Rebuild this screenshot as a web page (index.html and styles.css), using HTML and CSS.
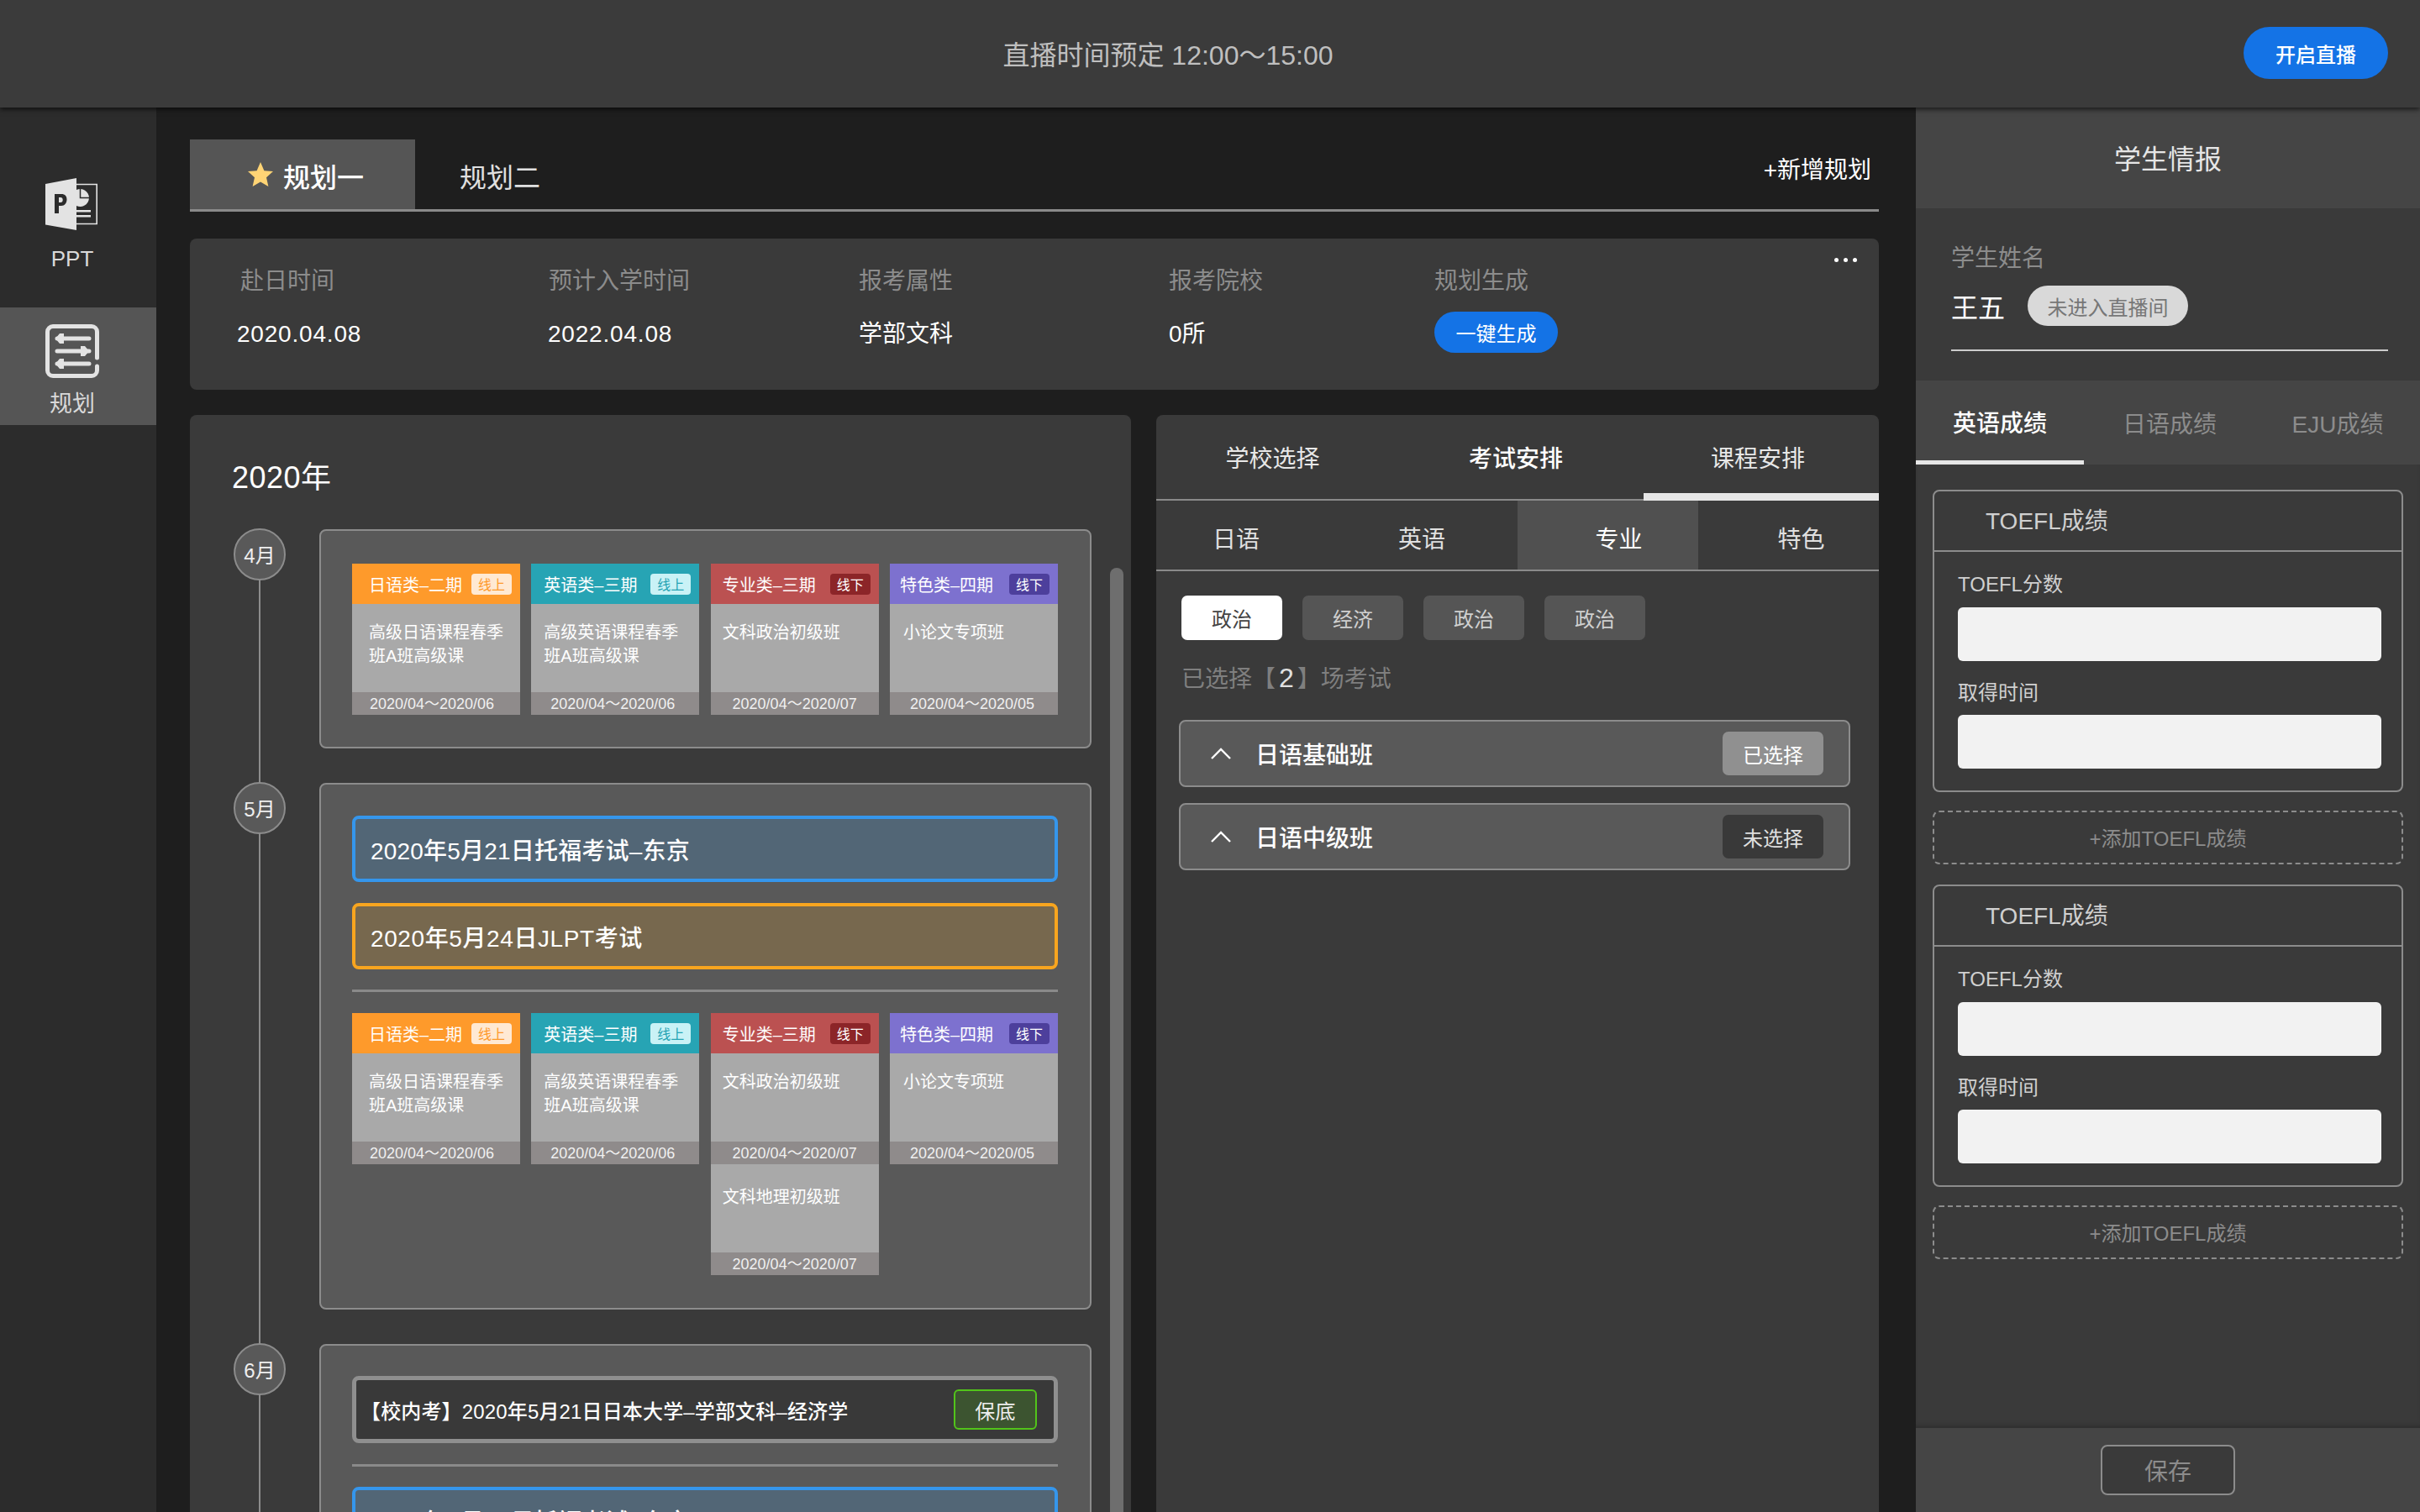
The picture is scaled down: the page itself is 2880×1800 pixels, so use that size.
FILE: index.html
```html
<!DOCTYPE html>
<html lang="zh">
<head>
<meta charset="utf-8">
<title>直播规划</title>
<link rel="stylesheet" href="styles.css">
</head>
<body>
<header class="topbar">
  <div class="topbar-title">直播时间预定 12:00～15:00</div>
  <button class="live-btn">开启直播</button>
</header>
<div class="layout">
  <nav class="side">
    <div class="side-item side-ppt">
      <svg class="ico-ppt" viewBox="0 0 62 62"><path fill="#e3e3e3" d="M0 7 37 0V62L0 55.500Z"/><path fill="#2c2c2c" fill-rule="evenodd" d="M11 19h8c4.500 0 6.500 2.500 6.500 6.500S23 33 19 33h-3v9h-5Zm5 4v6h2c1.800 0 2.700-1 2.700-3s-.9-3-2.700-3Z"/><path fill="none" stroke="#e3e3e3" stroke-width="1.600" d="M37 7.500h24.200v47H37"/><path fill="#e3e3e3" d="M37 14a10.500 10.500 0 1 1 0 19Z"/><path fill="none" stroke="#2c2c2c" stroke-width="1.500" d="M41.500 12v11.500H53"/><path fill="#e3e3e3" d="M37 38h17v2.500H37ZM37 44h17v2.500H37Z"/></svg>
      <span class="side-label">PPT</span>
    </div>
    <div class="side-item side-active">
      <svg class="ico-plan" viewBox="0 0 64 64"><path fill="none" stroke="#e3e3e3" stroke-width="5" stroke-linecap="round" d="M61.500 40V9a6.500 6.500 0 0 0-6.500-6.500H9A6.500 6.500 0 0 0 2.500 9v46A6.500 6.500 0 0 0 9 61.500h46a6.500 6.500 0 0 0 6.500-6.500v-5"/><path fill="none" stroke="#e3e3e3" stroke-width="5" stroke-linecap="round" d="M14 17h38M14 32h38M14 47h38"/><path fill="#e3e3e3" d="M17 11h5v12h-5l-5-6ZM42 26h5l5 6-5 6h-5ZM17 41h5v12h-5l-5-6Z"/></svg>
      <span class="side-label">规划</span>
    </div>
  </nav>

  <main class="main">
    <div class="plan-tabs">
      <div class="plan-tab plan-tab-on">
        <svg class="star" viewBox="0 0 30 30"><path fill="#ffd475" d="M15 0l4.400 10.200 10.600.900-8 7.200 2.400 10.700L15 23.400 5.600 29l2.400-10.700-8-7.200 10.600-.9Z"/></svg>
        <span>规划一</span>
      </div>
      <div class="plan-tab plan-tab-off">规划二</div>
      <div class="plan-add">+新增规划</div>
    </div>

    <section class="info">
      <div class="info-col col-a"><div class="info-k">赴日时间</div><div class="info-v num">2020.04.08</div></div>
      <div class="info-col col-b"><div class="info-k">预计入学时间</div><div class="info-v num">2022.04.08</div></div>
      <div class="info-col col-c"><div class="info-k">报考属性</div><div class="info-v">学部文科</div></div>
      <div class="info-col col-d"><div class="info-k">报考院校</div><div class="info-v">0所</div></div>
      <div class="info-col col-e"><div class="info-k">规划生成</div><button class="gen-btn">一键生成</button></div>
      <div class="dots"><i></i><i></i><i></i></div>
    </section>

    <div class="work">
      <section class="timeline">
        <h2 class="year">2020年</h2>
        <div class="track"></div>
        <div class="thumb"></div>

        <div class="month month-4">
          <div class="bubble">4月</div>
          <div class="mbox">
            <div class="cards">
              <div class="card"><div class="ch ch-o"><span>日语类–二期</span><b class="tag tag-o">线上</b></div><div class="cb">高级日语课程春季班A班高级课</div><div class="cf">2020/04～2020/06</div></div>
              <div class="card"><div class="ch ch-t"><span>英语类–三期</span><b class="tag tag-t">线上</b></div><div class="cb">高级英语课程春季班A班高级课</div><div class="cf">2020/04～2020/06</div></div>
              <div class="card"><div class="ch ch-r"><span>专业类–三期</span><b class="tag tag-r">线下</b></div><div class="cb">文科政治初级班</div><div class="cf">2020/04～2020/07</div></div>
              <div class="card"><div class="ch ch-p"><span>特色类–四期</span><b class="tag tag-p">线下</b></div><div class="cb">小论文专项班</div><div class="cf">2020/04～2020/05</div></div>
            </div>
          </div>
        </div>

        <div class="month month-5">
          <div class="bubble">5月</div>
          <div class="mbox mbox-5">
            <div class="exam exam-b">2020年5月21日托福考试–东京</div>
            <div class="exam exam-y">2020年5月24日JLPT考试</div>
            <hr class="rule">
            <div class="cards">
              <div class="card"><div class="ch ch-o"><span>日语类–二期</span><b class="tag tag-o">线上</b></div><div class="cb">高级日语课程春季班A班高级课</div><div class="cf">2020/04～2020/06</div></div>
              <div class="card"><div class="ch ch-t"><span>英语类–三期</span><b class="tag tag-t">线上</b></div><div class="cb">高级英语课程春季班A班高级课</div><div class="cf">2020/04～2020/06</div></div>
              <div class="card"><div class="ch ch-r"><span>专业类–三期</span><b class="tag tag-r">线下</b></div><div class="cb">文科政治初级班</div><div class="cf">2020/04～2020/07</div><div class="cb">文科地理初级班</div><div class="cf">2020/04～2020/07</div></div>
              <div class="card"><div class="ch ch-p"><span>特色类–四期</span><b class="tag tag-p">线下</b></div><div class="cb">小论文专项班</div><div class="cf">2020/04～2020/05</div></div>
            </div>
          </div>
        </div>

        <div class="month month-6">
          <div class="bubble">6月</div>
          <div class="mbox mbox-6">
            <div class="school"><span>【校内考】2020年5月21日日本大学–学部文科–经济学</span><b class="safe">保底</b></div>
            <hr class="rule rule-6">
            <div class="exam exam-b">2020年5月21日托福考试–东京</div>
          </div>
        </div>
      </section>

      <section class="arrange">
        <div class="a-tabs">
          <div class="a-tab">学校选择</div>
          <div class="a-tab a-tab-strong">考试安排</div>
          <div class="a-tab a-tab-on">课程安排</div>
        </div>
        <div class="s-tabs">
          <div class="s-tab s-1">日语</div>
          <div class="s-tab s-2">英语</div>
          <div class="s-tab s-3">专业</div>
          <div class="s-tab s-4">特色</div>
        </div>
        <div class="chips">
          <span class="chip chip-on">政治</span>
          <span class="chip">经济</span>
          <span class="chip">政治</span>
          <span class="chip">政治</span>
        </div>
        <div class="count">已选择【<em>2</em>】场考试</div>
        <div class="row">
          <svg class="chev" viewBox="0 0 24 14"><path fill="none" stroke="#fff" stroke-width="2.400" d="M1 13 12 2l11 11"/></svg>
          <span class="row-name">日语基础班</span>
          <button class="pick pick-on">已选择</button>
        </div>
        <div class="row">
          <svg class="chev" viewBox="0 0 24 14"><path fill="none" stroke="#fff" stroke-width="2.400" d="M1 13 12 2l11 11"/></svg>
          <span class="row-name">日语中级班</span>
          <button class="pick">未选择</button>
        </div>
      </section>
    </div>
  </main>

  <aside class="student">
    <div class="st-head">学生情报</div>
    <div class="st-name">
      <div class="st-k">学生姓名</div>
      <div class="st-v"><span class="st-who">王五</span><span class="st-pill">未进入直播间</span></div>
    </div>
    <div class="st-tabs">
      <div class="st-tab st-tab-on">英语成绩</div>
      <div class="st-tab">日语成绩</div>
      <div class="st-tab">EJU成绩</div>
    </div>
    <div class="st-body">
      <div class="score">
        <div class="score-h">TOEFL成绩</div>
        <div class="score-b">
          <label class="f-l">TOEFL分数</label><div class="f-i"></div>
          <label class="f-l f-l2">取得时间</label><div class="f-i"></div>
        </div>
      </div>
      <div class="add">+添加TOEFL成绩</div>
      <div class="score">
        <div class="score-h">TOEFL成绩</div>
        <div class="score-b">
          <label class="f-l">TOEFL分数</label><div class="f-i"></div>
          <label class="f-l f-l2">取得时间</label><div class="f-i"></div>
        </div>
      </div>
      <div class="add">+添加TOEFL成绩</div>
    </div>
    <div class="st-foot"><button class="save">保存</button></div>
  </aside>
</div>
</body>
</html>
```

FILE: styles.css
```css
* { box-sizing: border-box; }
html, body { margin: 0; height: 1800px; width: 2880px; overflow: hidden; background: #1e1e1e; }
body { font-family: "Liberation Sans", "Noto Sans CJK SC", sans-serif; color: #fff; text-spacing-trim: space-all; }
button { font-family: inherit; border: 0; padding: 0; }
hr { margin: 0; border: 0; }

.topbar { position: relative; z-index: 3; height: 128px; background: #3b3b3b; box-shadow: 0 2px 6px rgba(0,0,0,.7); display: flex; align-items: center; justify-content: center; padding: 3px 100px 0 0; }
.topbar-title { font-size: 32px; color: #bfbfbf; line-height: 44px; }
.live-btn { position: absolute; left: 2670px; top: 32px; width: 172px; height: 62px; border-radius: 31px; background: #1473e6; color: #fff; font-size: 24px; font-weight: 500; }

.layout { display: flex; height: 1672px; }
.side { width: 186px; flex: none; background: #2c2c2c; }
.side-item { height: 140px; display: flex; flex-direction: column; align-items: center; padding-right: 14px; }
.side-ppt { height: 238px; padding-top: 84px; }
.side-active { background: #555; padding-top: 20px; }
.ico-ppt { width: 62px; height: 62px; display: block; margin-right: 2px; }
.ico-plan { width: 64px; height: 64px; display: block; }
.side-label { font-size: 26px; line-height: 36px; color: #d9d9d9; }
.side-ppt .side-label { margin-top: 16px; }
.side-active .side-label { margin-top: 13px; font-size: 27px; }

.main { width: 2094px; flex: none; padding: 38px 44px 0 40px; }
.plan-tabs { height: 86px; display: flex; border-bottom: 3px solid #8a8a8a; position: relative; }
.plan-tab { height: 83px; display: flex; align-items: center; font-size: 32px; }
.plan-tab-on { width: 268px; background: #555; font-weight: 500; padding-left: 69px; gap: 12px; }
.plan-tab-on span, .plan-tab-off { padding-top: 2px; }
.star { width: 30px; height: 30px; }
.plan-tab-off { padding-left: 53px; color: #e0e0e0; }
.plan-add { margin-left: auto; margin-right: 9px; font-size: 28px; height: 83px; line-height: 73px; }

.info { height: 180px; margin-top: 32px; background: #3a3a3a; border-radius: 8px; position: relative; display: flex; }
.info-col { padding-top: 31px; flex: none; }
.col-a { width: 368px; padding-left: 56px; }
.col-b { width: 428px; padding-left: 58px; }
.col-c { width: 369px; }
.col-d { width: 316px; }
.info-k { font-size: 28px; line-height: 40px; color: #8c8c8c; padding-bottom: 23px; }
.col-a .info-k { padding-left: 4px; }
.col-b .info-k { padding-left: 1px; }
.info-v { font-size: 28px; line-height: 40px; color: #fff; }
.num { letter-spacing: .8px; }
.gen-btn { display: block; width: 147px; height: 49px; border-radius: 25px; background: #1473e6; color: #fff; font-size: 24px; margin-top: -7px; }
.dots { position: absolute; right: 26px; top: 23px; display: flex; gap: 6px; }
.dots i { display: block; width: 5px; height: 5px; border-radius: 50%; background: #fff; }

.work { display: flex; gap: 30px; margin-top: 30px; }
.timeline { position: relative; width: 1120px; height: 1306px; background: #3a3a3a; border-radius: 8px 8px 0 0; overflow: hidden; padding: 0 47px 0 52px; flex: none; }
.year { margin: 0 0 0 -2px; font-size: 36px; font-weight: 400; line-height: 50px; padding-top: 50px; height: 136px; letter-spacing: .5px; }
.track { position: absolute; left: 82px; top: 160px; bottom: 0; width: 2px; background: #8c8c8c; }
.thumb { position: absolute; left: 1095px; top: 182px; bottom: 0; width: 16px; background: #6e6e6e; border-radius: 8px 8px 0 0; }
.month { position: relative; padding-left: 102px; }
.month-5 { margin-top: 41px; }
.month-6 { margin-top: 41px; }
.bubble { position: absolute; left: 0; top: -1px; width: 62px; height: 62px; border-radius: 50%; background: #595959; border: 2px solid #8c8c8c; display: flex; align-items: center; justify-content: center; font-size: 24px; color: #eee; padding-bottom: 2px; }
.mbox { background: #595959; border: 2px solid #8c8c8c; border-radius: 8px; padding: 39px 38px 39px 37px; height: 261px; }
.mbox-5 { height: 627px; padding-top: 37px; }
.mbox-6 { height: 400px; padding-top: 36px; }
.cards { display: grid; grid-template-columns: repeat(4, 1fr); gap: 13.33px; align-items: start; }
.ch { height: 48px; display: flex; align-items: center; justify-content: space-between; padding: 0 10px 0 20px; font-size: 20px; color: #fff; }
.ch-o { background: #fe9a2b; }
.ch-t { background: #27a4b4; padding-left: 15px; }
.ch-r { background: #bb5151; padding-left: 14px; }
.ch-p { background: #7d71cf; padding-left: 12px; }
.tag { width: 48px; height: 25px; border-radius: 4px; display: flex; align-items: center; justify-content: center; font-size: 16px; font-weight: 400; }
.tag-o { background: #ffe9d3; color: #fe9a2b; }
.tag-t { background: #c9f2f6; color: #27a4b4; }
.tag-r { background: #8c2528; color: #fff; }
.tag-p { background: #4d3f9c; color: #fff; }
.cb { height: 105px; background: #a9a9a9; padding: 20px 14px 0 20px; font-size: 20px; line-height: 28px; color: #fff; }
.ch-t + .cb { padding-left: 15px; }
.ch-r ~ .cb { padding-left: 14px; }
.ch-p + .cb { padding-left: 16px; }
.cf ~ .cb { padding-top: 25px; }
.cf { height: 27px; background: #8f8b8b; font-size: 18px; line-height: 29px; color: #f0f0f0; text-align: center; }
.card:nth-child(1) .cf { text-align: left; padding-left: 21px; }
.card:nth-child(2) .cf { padding-right: 6px; }
.card:nth-child(4) .cf { padding-right: 4px; }

.exam { height: 79px; border: 4px solid; border-radius: 8px; font-size: 28px; font-weight: 500; display: flex; align-items: center; padding-left: 18px; color: #fff; }
.exam-b { background: #526676; border-color: #3596ec; letter-spacing: .2px; }
.exam-y { background: #77684e; border-color: #f8a51f; margin-top: 25px; letter-spacing: .6px; }
.rule { height: 3px; background: #8a8a8a; margin: 24px 0 25px; }
.rule-6 { margin: 25px 0 24px; }
.school { height: 80px; background: #393939; border: 5px solid #8f8f8f; border-radius: 8px; display: flex; align-items: center; justify-content: space-between; padding: 0 20px 0 0; font-size: 24px; font-weight: 500; letter-spacing: .15px; }
.school span { margin-left: 5px; }
.safe { width: 99px; height: 48px; border: 2px solid #52c41a; border-radius: 6px; background: #3c5430; color: #eee; font-size: 24px; font-weight: 400; display: flex; align-items: center; justify-content: center; }

.arrange { width: 860px; height: 1306px; background: #3a3a3a; border-radius: 8px 8px 0 0; flex: none; }
.a-tabs { height: 102px; display: grid; grid-template-columns: 290px 290px 280px; border-bottom: 2px solid #8a8a8a; position: relative; }
.a-tab { display: flex; align-items: center; justify-content: center; font-size: 28px; color: #e8e8e8; height: 100px; }
.a-tab-strong { font-weight: 500; color: #fff; padding-right: 14px; }
.a-tab:first-child { padding-right: 13px; }
.a-tab-on { height: 102px; border-bottom: 9px solid #e6e6e6; padding: 7px 8px 0 0; }
.s-tabs { height: 84px; border-bottom: 2px solid #8a8a8a; display: grid; grid-template-columns: 220px 210px 215px 215px; }
.s-tab { display: flex; align-items: center; justify-content: center; font-size: 28px; color: #e0e0e0; padding-top: 6px; }
.s-1 { padding-right: 30px; }
.s-2 { padding-right: 18px; }
.s-3 { background: #505050; color: #fff; padding-left: 26px; }
.s-4 { padding-left: 30px; }
.chips { display: flex; gap: 24px; padding: 29px 0 0 30px; }
.chip { width: 120px; height: 53px; border-radius: 7px; background: #555; color: #d0d0d0; font-size: 24px; display: flex; align-items: center; justify-content: center; }
.chip-on { background: #fff; color: #444; }
.count { margin: 27px 0 28px 30px; height: 40px; font-size: 28px; line-height: 40px; color: #7f7f7f; }
.count em { font-style: normal; color: #e0e0e0; font-size: 32px; line-height: 1; margin: 0 4px; }
.row { margin: 0 0 19px 27px; width: 799px; height: 80px; background: #595959; border: 2px solid #8c8c8c; border-radius: 8px; display: flex; align-items: center; padding-left: 36px; }
.chev { width: 24px; height: 14px; flex: none; }
.row-name { font-size: 28px; font-weight: 500; margin-left: 29px; }
.pick { margin-left: auto; margin-right: 30px; width: 120px; height: 52px; border-radius: 7px; background: #393939; color: #e0e0e0; font-size: 24px; }
.pick-on { background: #909090; color: #fff; }

.student { width: 600px; flex: none; background: #3a3a3a; display: flex; flex-direction: column; height: 1672px; }
.st-head { height: 120px; flex: none; background: #454545; display: flex; align-items: center; justify-content: center; font-size: 32px; color: #e6e6e6; padding-bottom: 2px; }
.st-name { height: 205px; flex: none; margin: 0 38px 0 42px; padding-top: 40px; position: relative; }
.st-k { font-size: 28px; line-height: 40px; color: #8c8c8c; }
.st-v { margin-top: 12px; height: 48px; display: flex; align-items: center; gap: 27px; }
.st-who { font-size: 32px; }
.st-pill { width: 191px; height: 48px; border-radius: 24px; background: #d9d9d9; color: #777; font-size: 24px; display: flex; align-items: center; justify-content: center; }
.st-name::after { content: ""; position: absolute; left: 0; right: 0; top: 168px; height: 2px; background: #ccc; }
.st-tabs { height: 100px; flex: none; background: #454545; display: grid; grid-template-columns: 200px 200px 200px; }
.st-tab { display: flex; align-items: center; justify-content: center; font-size: 28px; color: #8c8c8c; padding: 2px 0 2px 4px; }
.st-tab-on { color: #fff; font-weight: 500; border-bottom: 5px solid #e6e6e6; padding: 2px 0 0; }
.st-body { flex: 1; padding: 30px 20px 0; box-shadow: inset 0 -6px 6px -4px rgba(0,0,0,.25); }
.score { height: 360px; border: 2px solid #8c8c8c; border-radius: 8px; }
.score-h { height: 72px; border-bottom: 2px solid #8c8c8c; font-size: 28px; line-height: 72px; color: #d0d0d0; padding-left: 61px; }
.score-b { padding: 0 24px 0 28px; }
.f-l { display: block; font-size: 24px; line-height: 34px; color: #d0d0d0; padding-top: 22px; height: 66px; }
.f-l2 { padding-top: 21px; height: 64px; }
.f-i { height: 64px; background: #f2f2f2; border-radius: 6px; }
.add { height: 64px; margin: 22px 0 24px; border: 2px dashed #8c8c8c; border-radius: 8px; font-size: 24px; color: #8c8c8c; display: flex; align-items: center; justify-content: center; padding-bottom: 2px; }
.st-foot { height: 100px; flex: none; background: #454545; display: flex; align-items: center; justify-content: center; }
.save { width: 160px; height: 60px; background: #3a3a3a; border: 2px solid #8c8c8c; border-radius: 8px; color: #8c8c8c; font-size: 28px; }
```
